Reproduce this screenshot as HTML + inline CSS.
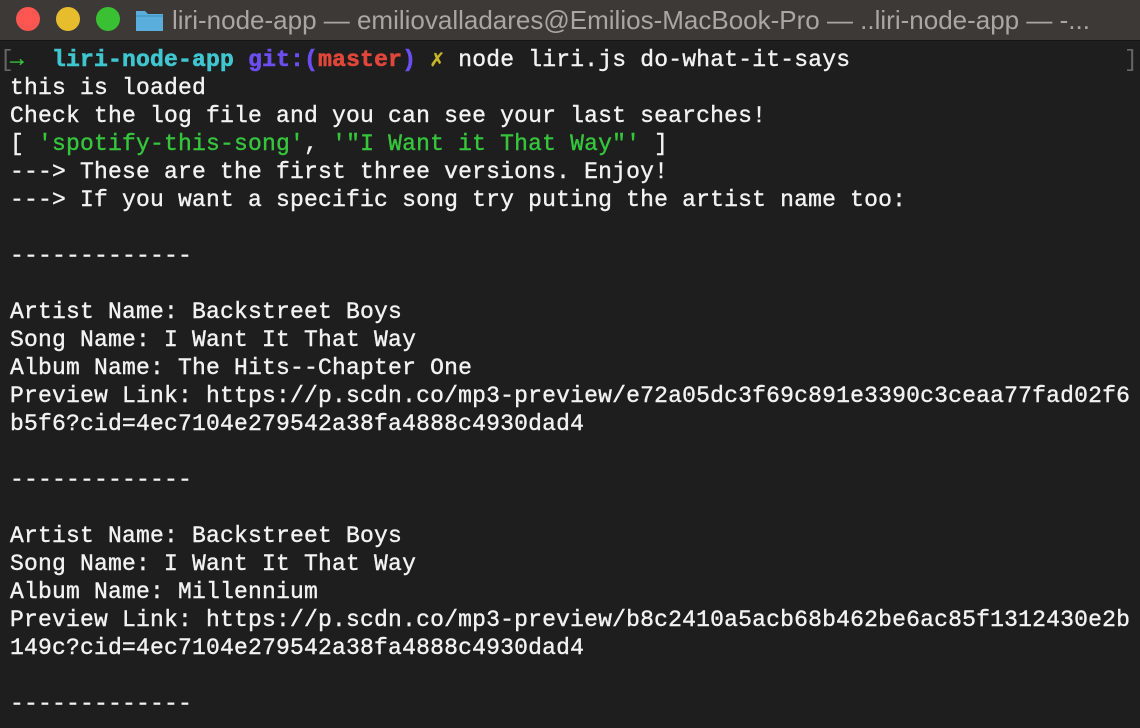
<!DOCTYPE html>
<html><head><meta charset="utf-8"><style>
html,body{margin:0;padding:0;width:1140px;height:728px;overflow:hidden;background:#1e1e1e;}
.tb{position:absolute;left:0;top:0;width:1140px;height:40px;background:#3c3937;border-bottom:1px solid #141414;}
.c{position:absolute;top:7px;width:24px;height:24px;border-radius:50%;}
.title{position:absolute;left:172px;top:5px;font:26px "Liberation Sans",sans-serif;color:#aaa6a2;white-space:nowrap;}
.term{position:absolute;left:10px;top:46px;font:23px/28px "Liberation Mono",monospace;letter-spacing:0.2px;color:#f2f2f2;white-space:pre;-webkit-text-stroke:0.4px #f2f2f2;}
.cy{color:#3fc6cf;-webkit-text-stroke:0.6px #3fc6cf;font-weight:bold}.pu{color:#6b4ef0;-webkit-text-stroke:0.6px #6b4ef0;font-weight:bold}.rd{color:#e0473a;-webkit-text-stroke:0.6px #e0473a;font-weight:bold}.ye{color:#c9b52a;-webkit-text-stroke:0.4px #c9b52a}.gr{color:#36c53c;-webkit-text-stroke:0.4px #36c53c}
.br{position:absolute;color:#666;font:23px/28px "Liberation Mono",monospace;top:46px;}
</style></head><body>
<div class="tb">
<div class="c" style="left:16px;background:#fe5650"></div>
<div class="c" style="left:56px;background:#e8bd2d"></div>
<div class="c" style="left:96px;background:#3ac033"></div>
<svg style="position:absolute;left:135px;top:8px" width="29" height="24"><path d="M1 3h9l3 3h15v17H1z" fill="#5aaedb"/><path d="M1 8h27" stroke="#3d8fbf" stroke-width="1"/></svg>
<div class="title">liri-node-app — emiliovalladares@Emilios-MacBook-Pro — ..liri-node-app — -...</div>
</div>
<div class="br" style="left:0">[</div><div class="br" style="left:1124px">]</div>
<div class="term"><span class="gr" style="font-weight:bold">→</span>  <span class="cy">liri-node-app</span> <span class="pu">git:(</span><span class="rd">master</span><span class="pu">)</span> <span class="ye">✗</span> node liri.js do-what-it-says
this is loaded
Check the log file and you can see your last searches!
[ <span class="gr">'spotify-this-song'</span>, <span class="gr">'"I Want it That Way"'</span> ]
---> These are the first three versions. Enjoy!
---> If you want a specific song try puting the artist name too:

-------------

Artist Name: Backstreet Boys
Song Name: I Want It That Way
Album Name: The Hits--Chapter One
Preview Link: https://p.scdn.co/mp3-preview/e72a05dc3f69c891e3390c3ceaa77fad02f6
b5f6?cid=4ec7104e279542a38fa4888c4930dad4

-------------

Artist Name: Backstreet Boys
Song Name: I Want It That Way
Album Name: Millennium
Preview Link: https://p.scdn.co/mp3-preview/b8c2410a5acb68b462be6ac85f1312430e2b
149c?cid=4ec7104e279542a38fa4888c4930dad4

-------------</div>
</body></html>
